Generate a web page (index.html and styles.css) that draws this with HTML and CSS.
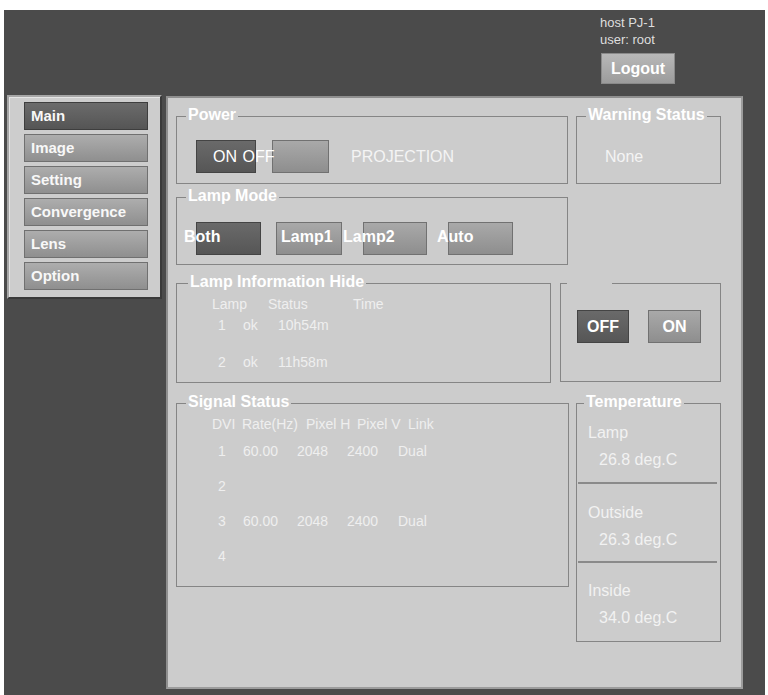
FILE: index.html
```html
<!DOCTYPE html>
<html>
<head>
<meta charset="utf-8">
<title>Projector Main</title>
<link rel="stylesheet" href="styles.css">
</head>
<body>
<div class="screen">
  <div class="header">
    <div class="who">host PJ-1</div>
    <div class="who">user: root</div>
    <div class="logout">Logout</div>
  </div>
  <div class="body">
    <nav class="sidebar">
      <div class="navbtn active">Main</div>
      <div class="navbtn">Image</div>
      <div class="navbtn">Setting</div>
      <div class="navbtn">Convergence</div>
      <div class="navbtn">Lens</div>
      <div class="navbtn">Option</div>
    </nav>
    <main class="panel">
      <div class="row row-a">
        <fieldset class="box power">
          <legend>Power</legend>
          <div class="power-row">
            <div class="btn dark w60"><span class="over">ON OFF</span></div>
            <div class="btn w57"></div>
            <span class="plain proj">PROJECTION</span>
          </div>
        </fieldset>
        <fieldset class="box warn">
          <legend>Warning Status</legend>
          <div class="warn-row"><span class="plain">None</span></div>
        </fieldset>
      </div>

      <div class="row row-b">
        <fieldset class="box mode">
          <legend>Lamp Mode</legend>
          <div class="mode-stack">
            <div class="mode-btns">
              <div class="btn dark w65"></div>
              <div class="btn w66"></div>
              <div class="btn w64"></div>
              <div class="btn w65"></div>
            </div>
            <div class="mode-labels">
              <span class="lbl l1">Both</span>
              <span class="lbl l2">Lamp1</span>
              <span class="lbl l3">Lamp2</span>
              <span class="lbl">Auto</span>
            </div>
          </div>
        </fieldset>
      </div>

      <div class="row row-c">
        <fieldset class="box lampinfo">
          <legend>Lamp Information Hide</legend>
          <div class="trow head li-head">
            <span class="c56">Lamp</span><span class="c85">Status</span><span>Time</span>
          </div>
          <div class="trow li-data r1">
            <span class="c25">1</span><span class="c35">ok</span><span>10h54m</span>
          </div>
          <div class="trow li-data r2">
            <span class="c25">2</span><span class="c35">ok</span><span>11h58m</span>
          </div>
        </fieldset>
        <fieldset class="box onoff">
          <legend class="blank">&nbsp;</legend>
          <div class="onoff-row">
            <div class="btn dark w52 txt">OFF</div>
            <div class="btn w53 txt">ON</div>
          </div>
        </fieldset>
      </div>

      <div class="row row-d">
        <fieldset class="box signal">
          <legend>Signal Status</legend>
          <div class="trow head sg-head">
            <span class="c30">DVI</span><span class="c64">Rate(Hz)</span><span class="c51">Pixel H</span><span class="c51">Pixel V</span><span>Link</span>
          </div>
          <div class="trow sg-data first">
            <span class="c25">1</span><span class="c54">60.00</span><span class="c50">2048</span><span class="c51">2400</span><span>Dual</span>
          </div>
          <div class="trow sg-data">
            <span class="c25">2</span>
          </div>
          <div class="trow sg-data">
            <span class="c25">3</span><span class="c54">60.00</span><span class="c50">2048</span><span class="c51">2400</span><span>Dual</span>
          </div>
          <div class="trow sg-data">
            <span class="c25">4</span>
          </div>
        </fieldset>
        <fieldset class="box temp">
          <legend>Temperature</legend>
          <div class="tsec s1">
            <div class="tlabel">Lamp</div>
            <div class="tval">26.8 deg.C</div>
          </div>
          <div class="tsec s2">
            <div class="tlabel">Outside</div>
            <div class="tval">26.3 deg.C</div>
          </div>
          <div class="tsec s3">
            <div class="tlabel">Inside</div>
            <div class="tval">34.0 deg.C</div>
          </div>
        </fieldset>
      </div>
    </main>
  </div>
</div>
</body>
</html>
```

FILE: styles.css
```css
html, body {
  margin: 0;
  padding: 0;
  background: #ffffff;
}

body {
  font-family: "Liberation Sans", Arial, sans-serif;
}

.screen {
  margin: 10px 0 0 4px;
  width: 761px;
  height: 685px;
  background: #4b4b4b;
  display: flex;
  flex-direction: column;
}

/* header */
.header {
  height: 86px;
  box-sizing: border-box;
  padding: 4px 0 0 596px;
  flex: none;
}

.who {
  font-size: 13px;
  line-height: 17px;
  color: #dedede;
}

.logout {
  margin: 5px 0 0 1px;
  width: 74px;
  height: 31px;
  box-sizing: border-box;
  background: linear-gradient(#b8b8b8, #9c9c9c);
  border: 1px solid #8a8a8a;
  color: #ffffff;
  font-weight: bold;
  font-size: 16px;
  line-height: 29px;
  text-align: center;
}

/* body */
.body {
  display: flex;
  align-items: flex-start;
  gap: 4px;
  padding-left: 3px;
}

.sidebar {
  margin-top: -1px;
  width: 155px;
  height: 204px;
  box-sizing: border-box;
  background: #cdcdcd;
  border: 2px solid #a6a6a6;
  border-right-color: #3a3a3a;
  border-bottom-color: #3a3a3a;
  box-shadow: inset 1px 1px 0 #e4e4e4;
  padding: 5px 0 0 15px;
  display: flex;
  flex-direction: column;
  gap: 4px;
}

.navbtn {
  width: 124px;
  height: 28px;
  box-sizing: border-box;
  border: 1px solid #707070;
  background: linear-gradient(#adadad, #8f8f8f);
  color: #f8f8f8;
  font-weight: bold;
  font-size: 15px;
  line-height: 26px;
  padding-left: 6px;
}

.navbtn.active {
  background: linear-gradient(#6b6b6b, #555555);
  border-color: #3e3e3e;
}

.panel {
  width: 577px;
  height: 593px;
  box-sizing: border-box;
  background: #cccccc;
  border: 2px solid #8f8f8f;
  border-right-color: #9c9c9c;
  border-bottom-color: #9c9c9c;
  padding: 8px 0 0 8px;
}

.row {
  display: flex;
  align-items: flex-start;
}

.row-b { margin-top: 3px; }
.row-c { margin-top: 8px; gap: 9px; }
.row-d { margin-top: 10px; gap: 7px; }
.row-a { gap: 8px; }

/* fieldsets */
.box {
  margin: 0;
  box-sizing: border-box;
  border: 1px solid #858585;
  padding: 0 0 0 9px;
  min-width: 0;
}

.box legend {
  padding: 0 2px 3px;
  font-weight: bold;
  font-size: 16px;
  line-height: 18px;
  color: #ffffff;
}

.power { width: 392px; }
.warn { width: 145px; }
.mode { width: 392px; }
.lampinfo { width: 375px; }
.lampinfo legend { margin-left: 2px; }
.onoff { width: 161px; }
.signal { width: 393px; }
.temp { width: 145px; padding: 0 3px 0 1px; }
.temp legend { margin-left: 6px; }

.plain {
  color: #f4f4f4;
  font-size: 16px;
}

/* generic buttons */
.btn {
  height: 33px;
  box-sizing: border-box;
  border: 1px solid #717171;
  background: linear-gradient(#a9a9a9, #8e8e8e);
  flex: none;
}

.btn.dark {
  background: linear-gradient(#6a6a6a, #565656);
  border-color: #444444;
}

.w52 { width: 52px; }
.w53 { width: 53px; }
.w57 { width: 57px; }
.w60 { width: 60px; }
.w64 { width: 64px; }
.w65 { width: 65px; }
.w66 { width: 66px; }

.btn.txt {
  color: #ffffff;
  font-weight: bold;
  font-size: 16px;
  line-height: 31px;
  text-align: center;
}

/* power */
.power-row {
  display: flex;
  align-items: center;
  padding: 13px 0 10px 10px;
}

.power-row .w60 {
  margin-right: 16px;
  padding-left: 16px;
  white-space: nowrap;
  line-height: 31px;
}

.over {
  position: relative;
  z-index: 1;
  color: #ffffff;
  font-size: 16px;
  word-spacing: 1px;
}

.proj { margin-left: 22px; }

.warn-row {
  height: 33px;
  display: flex;
  align-items: center;
  padding: 13px 0 10px 19px;
}

/* lamp mode */
.mode-stack {
  display: grid;
  padding: 14px 0 9px;
}

.mode-stack > * {
  grid-area: 1 / 1;
}

.mode-btns {
  display: flex;
  padding-left: 10px;
}

.mode-btns .btn + .btn { margin-left: 21px; }
.mode-btns .btn:nth-child(2) { margin-left: 15px; }

.mode-labels {
  display: flex;
  align-items: center;
  margin-left: -2px;
  margin-top: -4px;
  position: relative;
  z-index: 1;
}

.lbl {
  color: #ffffff;
  font-weight: bold;
  font-size: 16px;
}

.l1 { width: 97px; }
.l2 { width: 62px; }
.l3 { width: 94px; }

/* tables */
.trow {
  display: flex;
  font-size: 14px;
  line-height: 17px;
  height: 17px;
  color: #efefef;
  white-space: nowrap;
}

.trow span { flex: none; }

.c25 { width: 25px; }
.c30 { width: 30px; }
.c35 { width: 35px; }
.c50 { width: 50px; }
.c51 { width: 51px; }
.c54 { width: 54px; }
.c56 { width: 56px; }
.c64 { width: 64px; }
.c85 { width: 85px; }

.li-head { margin: 2px 0 0 26px; }
.li-data { margin-left: 32px; }
.li-data.r1 { margin-top: 4px; }
.li-data.r2 { margin-top: 20px; margin-bottom: 11px; }

.sg-head { margin: 2px 0 0 26px; }
.sg-data { margin: 18px 0 0 32px; }
.sg-data.first { margin-top: 10px; }
.sg-data:last-child { margin-bottom: 21px; }

/* on/off */
.onoff legend.blank {
  width: 45px;
  box-sizing: border-box;
  margin-left: -3px;
}

.onoff-row {
  display: flex;
  padding: 16px 0 38px 7px;
  gap: 19px;
}

/* temperature */
.tsec {
  box-sizing: border-box;
  color: #f2f2f2;
  font-size: 16px;
  line-height: 20px;
}

.tsec.s1 {
  height: 68px;
  padding-top: 9px;
}

.tsec.s2,
.tsec.s3 {
  height: 79px;
  border-top: 2px solid #8a8a8a;
  padding-top: 19px;
}

.tsec.s3 {
  height: 80px;
  padding-top: 18px;
}

.tlabel { padding-left: 10px; }

.tval {
  padding-left: 21px;
  margin-top: 7px;
}
```
